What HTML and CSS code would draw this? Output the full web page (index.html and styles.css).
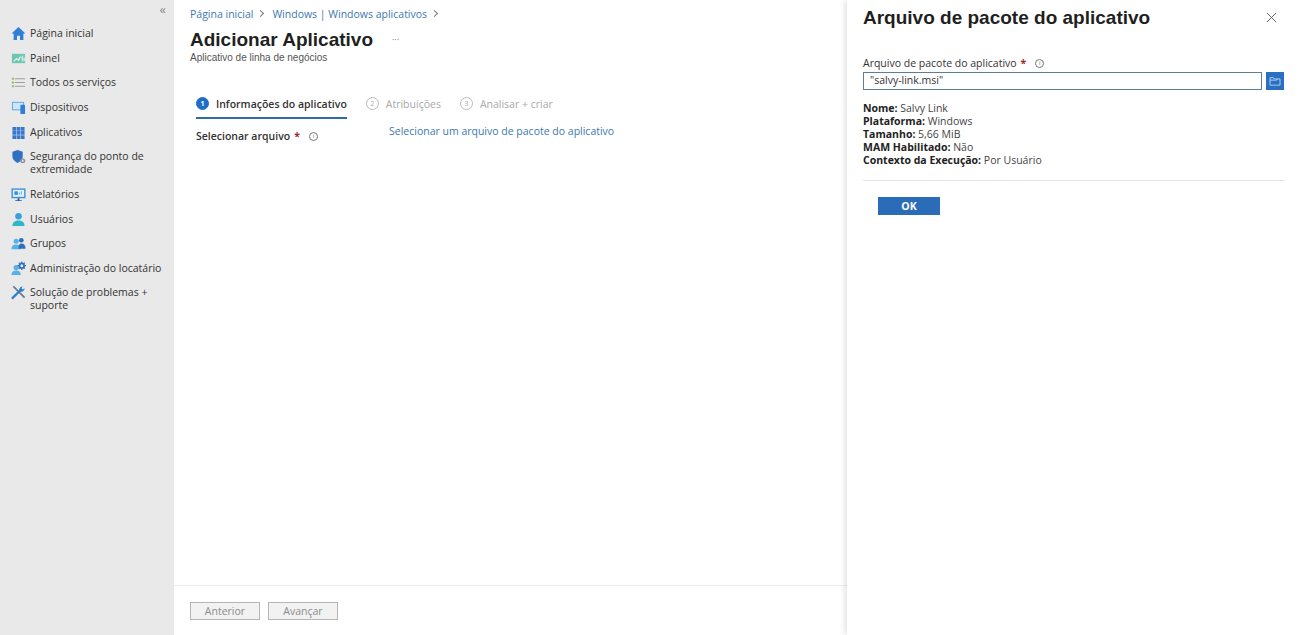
FILE: index.html
```html
<!DOCTYPE html>
<html lang="pt-BR">
<head>
<meta charset="utf-8">
<title>Adicionar Aplicativo</title>
<link rel="stylesheet" href="styles.css">
</head>
<body>
<div class="app">
  <nav class="sidebar">
    <div class="collapse">«</div>
    <a class="nav-item"><svg class="ico" viewBox="0 0 16 16"><path d="M8 1 .6 8h2.2v7h3.6v-4.5h3.2V15h3.6V8h2.2z" fill="#2f7fd6"/></svg><span>Página inicial</span></a>
    <a class="nav-item"><svg class="ico" viewBox="0 0 16 16"><rect x="1" y="3" width="14" height="10" fill="#6fc6b0"/><path d="M3 11l3-3 2 2 2-4M12 5v6M14 7v4" stroke="#e8f6f2" stroke-width="1.2" fill="none"/></svg><span>Painel</span></a>
    <a class="nav-item"><svg class="ico" viewBox="0 0 16 16"><path d="M1 3h2v2H1zM1 7h2v2H1zM1 11h2v2H1z" fill="#8cc04b"/><path d="M4 4h11M4 8h11M4 12h11" stroke="#9a9a9a" stroke-width="1"/></svg><span>Todos os serviços</span></a>
    <a class="nav-item"><svg class="ico" viewBox="0 0 16 16"><rect x="1" y="2" width="13" height="9" fill="#5aa5e6"/><rect x="2" y="3" width="11" height="7" fill="#cfe5f8"/><rect x="10" y="5" width="5" height="10" rx="1" fill="#2f7fd6"/></svg><span>Dispositivos</span></a>
    <a class="nav-item"><svg class="ico" viewBox="0 0 16 16"><path d="M1.500 2h4v4h-4zM6 2h4v4H6zM10.500 2h4v4h-4zM1.500 6.500h4v4h-4zM6 6.500h4v4H6zM10.500 6.500h4v4h-4zM1.500 11h4v4h-4zM6 11h4v4H6zM10.500 11h4v4h-4z" fill="#3a78cf"/></svg><span>Aplicativos</span></a>
    <a class="nav-item two"><svg class="ico" viewBox="0 0 16 16"><path d="M7 1 1.500 3v5c0 3 2.500 5.500 5.500 7 3-1.500 5.500-4 5.500-7V3z" fill="#2f6fc4"/><circle cx="12.500" cy="12.500" r="2.700" fill="#8a97a3"/><circle cx="12.500" cy="12.500" r="1" fill="#e8e8e8"/></svg><span>Segurança do ponto de extremidade</span></a>
    <a class="nav-item"><svg class="ico" viewBox="0 0 16 16"><rect x=".5" y="1.500" width="15" height="10.500" fill="#3d8fdc"/><rect x="2" y="3" width="12" height="7.500" fill="#e6f1fb"/><path d="M4 5h3v3H4zM9 8V6M11 8V4.500" fill="#3d8fdc" stroke="#3d8fdc" stroke-width=".8"/><path d="M7 12h2v2H7zM4.500 14h7v1h-7z" fill="#1f5fa8"/></svg><span>Relatórios</span></a>
    <a class="nav-item"><svg class="ico" viewBox="0 0 16 16"><circle cx="8" cy="4.500" r="3.500" fill="#3aa0dc"/><path d="M1.500 15c0-4.500 3-6 6.500-6s6.500 1.500 6.500 6z" fill="#2fb7c9"/></svg><span>Usuários</span></a>
    <a class="nav-item"><svg class="ico" viewBox="0 0 16 16"><circle cx="5.500" cy="5.500" r="2.700" fill="#58b0e6"/><path d="M.5 14c0-3.500 2-5 5-5s5 1.500 5 5z" fill="#58b0e6"/><circle cx="11" cy="4.500" r="2.500" fill="#2c6fc0"/><path d="M8 13.500c0-3.500 1-5.500 3-5.500 2.800 0 4.500 1.800 4.500 5.500z" fill="#2c6fc0"/></svg><span>Grupos</span></a>
    <a class="nav-item"><svg class="ico" viewBox="0 0 16 16"><circle cx="5.500" cy="7" r="2.800" fill="#58b0e6"/><path d="M.5 15c0-3.500 2-5 5-5s5 1.500 5 5z" fill="#58b0e6"/><circle cx="11.500" cy="5" r="2.500" fill="none" stroke="#2c6fc0" stroke-width="1.800"/><path d="M11.500 .5v1.500M11.500 8v1.500M7 5h1.500M14.500 5H16M8.300 1.800l1 1M13.700 7.200l1 1M8.300 8.200l1-1M13.700 2.800l1-1" stroke="#2c6fc0" stroke-width="1.300"/></svg><span>Administração do locatário</span></a>
    <a class="nav-item two"><svg class="ico" viewBox="0 0 16 16"><path d="M2.500 1.500 14.500 13.500" stroke="#6d7a86" stroke-width="1.800"/><path d="M1 14.500 10.500 5" stroke="#2c7fd0" stroke-width="2.400"/><path d="M9 6.500c-1-2.500.8-5 3.500-5l-1.300 2 1.300 1.300 2-1.300c0 2.700-2.500 4.500-5 3.500z" fill="#2c7fd0"/></svg><span>Solução de problemas + suporte</span></a>
  </nav>

  <main class="main">
    <div class="main-body">
      <div class="crumbs"><a>Página inicial</a><span class="sep"></span><a>Windows | Windows aplicativos</a><span class="sep"></span></div>
      <div class="title-row"><h1>Adicionar Aplicativo</h1><span class="more">···</span></div>
      <div class="subtitle">Aplicativo de linha de negócios</div>
      <div class="steps">
        <div class="step active"><span class="num">1</span><span>Informações do aplicativo</span></div>
        <div class="step"><span class="num">2</span><span>Atribuições</span></div>
        <div class="step"><span class="num">3</span><span>Analisar + criar</span></div>
      </div>
      <div class="field">
        <div class="field-label"><span>Selecionar arquivo</span><span class="req">*</span><span class="info">i</span></div>
        <a class="pick">Selecionar um arquivo de pacote do aplicativo</a>
      </div>
    </div>
    <footer class="footer">
      <button class="btn b1">Anterior</button>
      <button class="btn b2">Avançar</button>
    </footer>
  </main>

  <aside class="panel">
    <header class="panel-head">
      <h2>Arquivo de pacote do aplicativo</h2>
      <svg class="close" viewBox="0 0 12 12"><path d="M1 1l10 10M11 1 1 11" stroke="#555" stroke-width="1" fill="none"/></svg>
    </header>
    <div class="panel-label"><span>Arquivo de pacote do aplicativo</span><span class="req">*</span><span class="info">i</span></div>
    <div class="input-row">
      <div class="input">"salvy-link.msi"</div>
      <div class="browse"><svg viewBox="0 0 14 12"><path d="M1 2h4l1 1.500h7v7.500H1z" fill="none" stroke="#bfe0f7" stroke-width="1"/><path d="M1 5h8l1-1.500" fill="none" stroke="#bfe0f7" stroke-width="1"/></svg></div>
    </div>
    <dl class="meta">
      <div><b>Nome:</b> Salvy Link</div>
      <div><b>Plataforma:</b> Windows</div>
      <div><b>Tamanho:</b> 5,66 MiB</div>
      <div><b>MAM Habilitado:</b> Não</div>
      <div><b>Contexto da Execução:</b> Por Usuário</div>
    </dl>
    <div class="actions"><button class="ok">OK</button></div>
  </aside>
</div>
</body>
</html>
```
FILE: styles.css
```css
* { box-sizing: border-box; }
html, body { margin: 0; height: 100%; overflow: hidden; }
body { font-family: "Open Sans", "Noto Sans", sans-serif; font-size: 10.500px; color: #2b2b2b; background: #fff; }
.app { display: flex; width: 1300px; height: 635px; }

.sidebar { width: 174px; flex: none; background: #e9e9e9; padding: 0 8px 0 11px; display: flex; flex-direction: column; }
.collapse { height: 21px; text-align: right; font-size: 13px; line-height: 18px; color: #8a8a8a; padding-right: 0; }
.nav-item { display: flex; align-items: center; gap: 4px; height: 24.700px; color: #333; line-height: 13px; }
.nav-item.two { height: 37.700px; align-items: flex-start; padding-top: 5.500px; }
.ico { width: 15px; height: 15px; flex: none; }
.nav-item.two .ico { margin-top: -1px; }

.main { width: 673px; flex: none; display: flex; flex-direction: column; }
.main-body { flex: 1; padding: 6px 0 0 16px; }
.crumbs { display: flex; align-items: center; height: 15px; font-size: 10.500px; color: #3d78b0; }
.sep { width: 5px; height: 5px; border-top: 1px solid #777; border-right: 1px solid #777; transform: rotate(45deg); margin: 0 9px 0 5px; }
.title-row { display: flex; align-items: center; margin-top: 7px; height: 23px; }
h1 { margin: 0; font: bold 19px/23px "Liberation Sans", Arial, sans-serif; color: #1f1f1f; }
.more { margin-left: 19px; font-size: 9px; color: #777; letter-spacing: 0; }
.subtitle { font: 10px/13px "Liberation Sans", Arial, sans-serif; color: #555; margin-top: 0; }
.steps { display: flex; margin: 32px 0 0 6px; gap: 19px; height: 30px; }
.step { display: flex; align-items: flex-start; gap: 7px; color: #a9a9a9; font-size: 10.500px; line-height: 14px; padding-top: 1px; }
.step.active { color: #333; font-weight: 600; border-bottom: 2px solid #2e6da4; height: 23px; }
.num { width: 13px; height: 13px; border: 1px solid #bbb; border-radius: 50%; font-size: 7px; line-height: 11px; text-align: center; font-weight: 400; }
.active .num { background: #1e6fc4; border-color: #1e6fc4; color: #fff; font-weight: 700; }
.field { display: flex; align-items: flex-start; margin: -2px 0 0 6px; }
.field-label { width: 193px; display: flex; align-items: center; font-weight: 600; color: #333; height: 14px; margin-top: 5px; }
.req { color: #a4262c; margin-left: 4px; font-weight: 700; }
.info { width: 9px; height: 9px; border: 1px solid #777; border-radius: 50%; font-size: 6px; line-height: 7px; text-align: center; margin-left: 9px; color: #666; font-weight: 400; }
.pick { color: #3d78b0; line-height: 14px; }
.footer { height: 50px; border-top: 1px solid #ebebeb; padding: 16px 0 0 16px; display: flex; gap: 8px; align-items: flex-start; }
.btn { height: 18px; border: 1px solid #b5b5b5; background: #f2f2f2; color: #8a8a8a; font: 10.500px/14px "Open Sans", sans-serif; padding: 0; }
.b1 { width: 70px; }
.b2 { width: 70px; }

.panel { width: 453px; flex: none; background: #fff; box-shadow: -2px 0 6px rgba(0,0,0,.12); padding: 0 16px 0 16px; position: relative; }
.panel-head { display: flex; justify-content: space-between; align-items: flex-start; height: 56px; padding-top: 6px; }
h2 { margin: 0; font: bold 19px/23px "Liberation Sans", Arial, sans-serif; color: #1f1f1f; }
.close { width: 11px; height: 11px; margin: 6px 7px 0 0; }
.panel-label { display: flex; align-items: center; height: 14px; color: #333; }
.input-row { display: flex; gap: 4px; margin-top: 2px; }
.input { width: 400px; height: 18px; border: 1px solid #5b7f95; padding: 0 6px; line-height: 15px; color: #333; }
.browse { width: 18px; height: 18px; background: #2b6fc2; display: flex; align-items: center; justify-content: center; }
.browse svg { width: 12px; height: 10px; }
.meta { margin: 12px 0 0; line-height: 13px; color: #444; padding-bottom: 13px; border-bottom: 1px solid #e6e6e6; width: 422px; }
.meta b { font-weight: 700; color: #222; }
.actions { padding: 16px 0 0 15px; }
.ok { width: 62px; height: 18px; background: #2b6cb8; color: #fff; border: 0; font: 700 10.500px/14px "Open Sans", sans-serif; padding: 0; }
```
